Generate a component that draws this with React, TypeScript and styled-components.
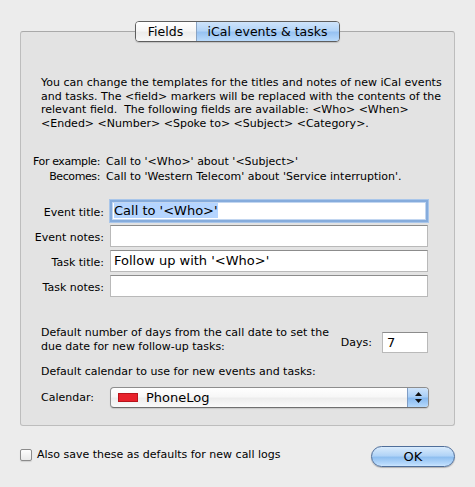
import React from "react";
import styled, { createGlobalStyle } from "styled-components";

const Global = createGlobalStyle`
  html, body { margin: 0; padding: 0; background: #ececec; }
  body { font-family: "DejaVu Sans", "Liberation Sans", sans-serif; color: #000; }
  * { box-sizing: border-box; }
`;

const Page = styled.div`
  width: 475px;
  height: 487px;
  padding: 21px 20px 0 20px;
  background: #ececec;
  display: flex;
  flex-direction: column;
`;

const TabBar = styled.div`
  position: relative;
  z-index: 1;
  align-self: center;
  display: flex;
  height: 21px;
  margin-left: -1px;
  border: 1px solid #5e5e5e;
  border-radius: 4px;
  overflow: hidden;
  box-shadow: 0 1px 1px rgba(0, 0, 0, 0.15);
`;

const Tab = styled.div<{ $active?: boolean }>`
  display: flex;
  align-items: center;
  justify-content: center;
  font-size: 12.5px;
  padding: 0 ${(p) => (p.$active ? "11px" : "10px")};
  width: ${(p) => (p.$active ? "143px" : "60px")};
  background: ${(p) =>
    p.$active
      ? "linear-gradient(#cfe4fb 0%, #b3d4f7 45%, #97c2f2 55%, #b9dafb 100%)"
      : "linear-gradient(#ffffff 0%, #f6f6f6 45%, #ececec 55%, #f8f8f8 100%)"};
  border-left: ${(p) => (p.$active ? "1px solid #8aa3c2" : "none")};
  color: #000;
`;

const Box = styled.div`
  margin-top: -11px;
  border: 1px solid #bdbdbd;
  border-top-color: #a9a9a9;
  border-radius: 3px;
  background: #e3e3e3;
  padding: 44px 26px 17px 20px;
  display: flex;
  flex-direction: column;
  font-size: 11px;
`;

const Para = styled.div<{ $mt?: number }>`
  line-height: 13.5px;
  margin-top: ${(p) => p.$mt ?? 0}px;
  white-space: nowrap;
`;

const ExampleGrid = styled.div`
  margin-top: 24px;
  display: grid;
  grid-template-columns: 59px 1fr;
  column-gap: 6px;
  line-height: 15px;
  white-space: nowrap;
`;

const ExLabel = styled.div`
  justify-self: end;
  text-align: right;
  letter-spacing: -0.4px;
`;

const FieldGrid = styled.div`
  margin-top: 16px;
  display: grid;
  grid-template-columns: 63px 1fr;
  column-gap: 6px;
  row-gap: 3px;
`;

const FieldLabel = styled.div`
  text-align: right;
  display: flex;
  align-items: center;
  justify-content: flex-end;
  white-space: nowrap;
  height: 22px;
  padding-top: 3px;
`;

const TextField = styled.div<{ $focused?: boolean }>`
  height: 22px;
  background: #fff;
  border: 1px solid #b9b9b9;
  border-top-color: #8c8c8c;
  font-size: 13px;
  line-height: 18px;
  padding: 1px 3px 0 3px;
  white-space: nowrap;
  ${(p) =>
    p.$focused &&
    `
    border: 2px solid #86acdc;
    box-shadow: 0 0 0 1px #a9c6ea, inset 0 0 0 1px #c2d6f0;
    padding: 0 2px 0 2px;
  `}
`;

const Selected = styled.span`
  background: #b5d5ff;
`;

const DaysRow = styled.div`
  margin-top: 29px;
  display: flex;
  justify-content: space-between;
  align-items: flex-start;
`;

const DaysControl = styled.div`
  margin-top: 6px;
  display: flex;
  align-items: center;
  gap: 10px;
`;

const SmallField = styled(TextField)`
  width: 46px;
  height: 21px;
  padding-left: 4px;
`;

const CalRow = styled.div`
  margin-top: 8.5px;
  display: grid;
  grid-template-columns: 63px 1fr;
  column-gap: 6px;
  align-items: center;
`;

const Popup = styled.div`
  height: 21px;
  margin-right: -1px;
  display: flex;
  align-items: stretch;
  border: 1px solid #8d8d8d;
  border-bottom-color: #6f6f6f;
  border-radius: 4px;
  overflow: hidden;
  background: linear-gradient(#ffffff 0%, #f7f7f7 45%, #ededed 55%, #fafafa 100%);
  box-shadow: 0 1px 1px rgba(0, 0, 0, 0.12);
`;

const PopupBody = styled.div`
  flex: 1;
  display: flex;
  align-items: center;
  padding-left: 7px;
  gap: 8px;
  font-size: 13px;
`;

const Swatch = styled.div<{ $color: string }>`
  width: 20px;
  height: 9px;
  background: ${(p) => p.$color};
  border: 1px solid #b8141c;
`;

const PopupArrows = styled.div`
  width: 21px;
  border-left: 1px solid #7f9cc4;
  background: linear-gradient(#cfe4fb 0%, #a9cff7 45%, #88baf0 55%, #b6d9fb 100%);
  display: flex;
  align-items: center;
  justify-content: center;
`;

const BottomRow = styled.div`
  margin-top: 20px;
  display: flex;
  justify-content: space-between;
  align-items: flex-start;
`;

const CheckLabel = styled.label`
  display: flex;
  align-items: center;
  gap: 5px;
  font-size: 11px;
  margin-top: 2px;
`;

const CheckBox = styled.span`
  width: 12px;
  height: 12px;
  border: 1px solid #8b8b8b;
  border-radius: 2px;
  background: linear-gradient(#fdfdfd, #e9e9e9);
  box-shadow: 0 1px 1px rgba(0, 0, 0, 0.12);
`;

const OkButton = styled.button`
  width: 84px;
  height: 21px;
  border: 1px solid #4f6e9a;
  border-radius: 11px;
  background: linear-gradient(#d9ebfc 0%, #b2d4f7 45%, #8fbff0 55%, #b8dafc 90%, #cde6fd 100%);
  box-shadow: 0 1px 1px rgba(0, 0, 0, 0.25);
  font-family: "DejaVu Sans", "Liberation Sans", sans-serif;
  font-size: 13px;
  color: #000;
  padding: 0;
  margin-right: 0;
`;

export default function App() {
  return (
    <>
      <Global />
      <Page>
        <TabBar>
          <Tab>Fields</Tab>
          <Tab $active>iCal events &amp; tasks</Tab>
        </TabBar>
        <Box>
          <Para>
            You can change the templates for the titles and notes of new iCal events
            <br />
            and tasks. The &lt;field&gt; markers will be replaced with the contents of the
            <br />
            relevant field.&nbsp; The following fields are available: &lt;Who&gt; &lt;When&gt;
            <br />
            &lt;Ended&gt; &lt;Number&gt; &lt;Spoke to&gt; &lt;Subject&gt; &lt;Category&gt;.
          </Para>
          <ExampleGrid>
            <ExLabel>For example:</ExLabel>
            <div>Call to '&lt;Who&gt;' about '&lt;Subject&gt;'</div>
            <ExLabel>Becomes:</ExLabel>
            <div>Call to 'Western Telecom' about 'Service interruption'.</div>
          </ExampleGrid>
          <FieldGrid>
            <FieldLabel>Event title:</FieldLabel>
            <TextField $focused>
              <Selected>Call to '&lt;Who&gt;'</Selected>
            </TextField>
            <FieldLabel>Event notes:</FieldLabel>
            <TextField />
            <FieldLabel>Task title:</FieldLabel>
            <TextField>Follow up with '&lt;Who&gt;'</TextField>
            <FieldLabel>Task notes:</FieldLabel>
            <TextField />
          </FieldGrid>
          <DaysRow>
            <Para>
              Default number of days from the call date to set the
              <br />
              due date for new follow-up tasks:
            </Para>
            <DaysControl>
              <span>Days:</span>
              <SmallField>7</SmallField>
            </DaysControl>
          </DaysRow>
          <Para $mt={12}>Default calendar to use for new events and tasks:</Para>
          <CalRow>
            <span>Calendar:</span>
            <Popup>
              <PopupBody>
                <Swatch $color="#e8212b" />
                <span>PhoneLog</span>
              </PopupBody>
              <PopupArrows>
                <svg width="7" height="11" viewBox="0 0 7 11">
                  <path d="M3.5 0 L7 4 L0 4 Z" fill="#111" />
                  <path d="M0 7 L7 7 L3.5 11 Z" fill="#111" />
                </svg>
              </PopupArrows>
            </Popup>
          </CalRow>
        </Box>
        <BottomRow>
          <CheckLabel>
            <CheckBox />
            Also save these as defaults for new call logs
          </CheckLabel>
          <OkButton>OK</OkButton>
        </BottomRow>
      </Page>
    </>
  );
}
